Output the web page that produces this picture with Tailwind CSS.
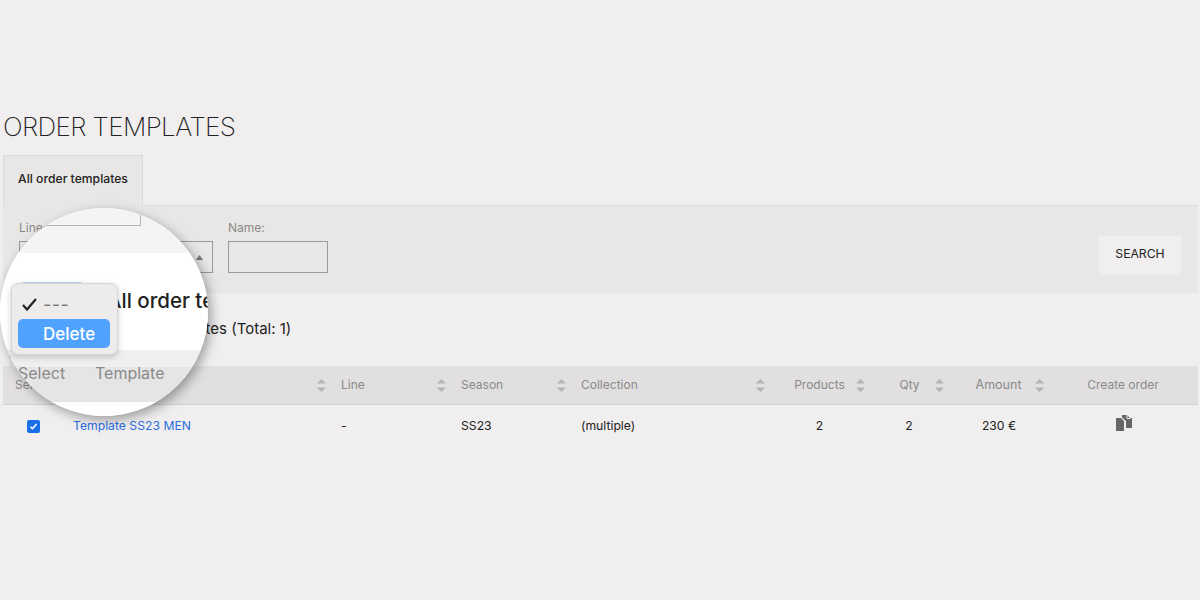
<!doctype html>
<html lang="en">
    <head>
        <meta charset="UTF-8" />
        <title>Order templates</title>
        <script src="https://cdn.jsdelivr.net/npm/@tailwindcss/browser@4"></script>
    </head>
    <body class="bg-[#f0eeef] font-['Inter',sans-serif] text-black">
        <div class="relative w-[1200px] h-[600px] overflow-hidden">
            <main class="pt-[112px] pl-[3px] pr-[2px]">
                <h1 class="text-[26px] leading-[30px] font-extralight text-[#222] tracking-[-0.62px] mb-[13px]">ORDER TEMPLATES</h1>

                <div class="w-[140px] h-[51px] -mb-px pb-[3px] relative bg-[#e8e7e5] border border-b-0 border-[#dcdbd9] flex items-center justify-center text-[12.2px] font-[450] text-[#222]">All order templates</div>

                <section class="h-[88px] bg-[#e8e7e5] border-t border-[#dcdbd9] flex items-start pl-[16px] pr-[17px]">
                    <div class="w-[109px] pt-[14px]">
                        <div class="text-[12px] leading-[16px] text-[#8a8a8a]">Line:</div>
                        <div class="mt-[5px] w-[100px] h-[32px] border border-[#9a9a9a]"></div>
                    </div>
                    <div class="w-[100px] pt-[14px]">
                        <div class="text-[12px] leading-[16px] text-[#8a8a8a]">Year:</div>
                        <div class="mt-[5px] w-[85px] h-[32px] border border-[#9a9a9a] flex items-center justify-end pr-[9px]">
                            <svg width="7" height="5" viewBox="0 0 7 5"><path d="M3.5 0L7 5H0z" fill="#777" /></svg>
                        </div>
                    </div>
                    <div class="pt-[14px]">
                        <div class="text-[12px] leading-[16px] text-[#8a8a8a]">Name:</div>
                        <div class="mt-[5px] w-[100px] h-[32px] border border-[#9a9a9a]"></div>
                    </div>
                    <button class="ml-auto mt-[30px] w-[82px] h-[39px] pb-[3px] bg-[#f0eeef] text-[12.2px] text-[#222]">SEARCH</button>
                </section>

                <div class="h-[73px] pl-[110px] pt-[26px] text-[15px] leading-[20px] text-[#222]">Order templates (Total: 1)</div>

                <div class="h-[39px] bg-[#e1dfdf] border-b border-[#d2d1d1] grid grid-cols-[60px_268px_120px_120px_199px_100px_80px_100px_148px] items-center text-[12px] text-[#8a8a8a]">
                    <div class="pl-[12px]">Select</div>
                    <div class="flex items-center justify-between pl-[10px] pr-[5px]">
                        <span>Template</span>
                        <svg width="9" height="13" viewBox="0 0 9 13"><path d="M4.5 0L9 4.5H0zM0 8.500h9L4.5 13z" fill="#b5b4b4" /></svg>
                    </div>
                    <div class="flex items-center justify-between pl-[10px] pr-[5px]">
                        <span>Line</span>
                        <svg width="9" height="13" viewBox="0 0 9 13"><path d="M4.5 0L9 4.5H0zM0 8.500h9L4.5 13z" fill="#b5b4b4" /></svg>
                    </div>
                    <div class="flex items-center justify-between pl-[10px] pr-[5px]">
                        <span>Season</span>
                        <svg width="9" height="13" viewBox="0 0 9 13"><path d="M4.5 0L9 4.5H0zM0 8.500h9L4.5 13z" fill="#b5b4b4" /></svg>
                    </div>
                    <div class="flex items-center justify-between pl-[10px] pr-[5px]">
                        <span>Collection</span>
                        <svg width="9" height="13" viewBox="0 0 9 13"><path d="M4.5 0L9 4.5H0zM0 8.500h9L4.5 13z" fill="#b5b4b4" /></svg>
                    </div>
                    <div class="grid grid-cols-[1fr_auto_1fr] items-center pl-[4px] pr-[5px]">
                        <span class="col-start-2">Products</span>
                        <svg class="justify-self-end" width="9" height="13" viewBox="0 0 9 13"><path d="M4.5 0L9 4.5H0zM0 8.500h9L4.5 13z" fill="#b5b4b4" /></svg>
                    </div>
                    <div class="grid grid-cols-[1fr_auto_1fr] items-center pl-[5px] pr-[6px]">
                        <span class="col-start-2">Qty</span>
                        <svg class="justify-self-end" width="9" height="13" viewBox="0 0 9 13"><path d="M4.5 0L9 4.5H0zM0 8.500h9L4.5 13z" fill="#b5b4b4" /></svg>
                    </div>
                    <div class="grid grid-cols-[1fr_auto_1fr] items-center pl-[3px] pr-[6px]">
                        <span class="col-start-2 text-[12.5px]">Amount</span>
                        <svg class="justify-self-end" width="9" height="13" viewBox="0 0 9 13"><path d="M4.5 0L9 4.5H0zM0 8.500h9L4.5 13z" fill="#b5b4b4" /></svg>
                    </div>
                    <div class="text-center pr-[2px]">Create order</div>
                </div>

                <div class="h-[40px] pt-[2px] grid grid-cols-[60px_268px_120px_120px_199px_100px_80px_100px_148px] items-center text-[12.2px] text-[#222]">
                    <div class="flex justify-center">
                        <span class="w-[13px] h-[13px] rounded-[2px] bg-[#1a6fe8] flex items-center justify-center">
                            <svg width="9" height="9" viewBox="0 0 9 9" fill="none"><path d="M1.500 4.700l2 2 4-4.600" stroke="#fff" stroke-width="1.600" /></svg>
                        </span>
                    </div>
                    <div class="pl-[10px]"><a href="#" class="text-[#2b6fdf]">Template SS23 MEN</a></div>
                    <div class="pl-[10px]">-</div>
                    <div class="pl-[10px]">SS23</div>
                    <div class="pl-[10px]">(multiple)</div>
                    <div class="text-center pr-[1px]">2</div>
                    <div class="text-center pr-[2px]">2</div>
                    <div class="text-center pr-[2px]">230 €</div>
                    <div class="flex justify-center pb-[6px]">
                        <svg width="17" height="16" viewBox="0 0 17 16"><path d="M0 3h5l3 3v10H0z" fill="#666" /><path d="M6 0h5l3 3h2v10h-6V6L6 2.500z" fill="#666" /><path d="M11 0v3.500h3.500" fill="none" stroke="#f0eeef" stroke-width="1" /></svg>
                    </div>
                </div>
            </main>

            <!-- magnifier lens over the page -->
            <div class="absolute left-0 top-[208px] w-[208px] h-[208px] rounded-full overflow-hidden bg-white shadow-[3px_4px_12px_rgba(0,0,0,0.35)]">
                <div class="h-[45px] bg-[#f4f4f4]">
                    <div class="ml-[46px] w-[95px] h-[18px] border-r border-b border-[#b5b5b5]"></div>
                </div>
                <div class="h-[97px] bg-white pl-[107px] pt-[34px] text-[20.5px] leading-[28px] font-[450] text-[#222] whitespace-nowrap">All order templates</div>
                <div class="h-[17px] bg-[#f0efef]"></div>
                <div class="h-[35px] bg-[#e6e5e5] flex items-start pl-[18px] text-[16px] leading-[20px] text-[#8a8a8a]">
                    <span class="w-[77px] -mt-[4px]">Select</span>
                    <span class="-mt-[4px]">Template</span>
                </div>
                <div class="h-[14px] bg-white"></div>
            </div>

            <!-- edge of the magnified select, showing past the lens and the menu -->
            <div class="absolute left-[10px] top-[355px] w-[5px] h-[13px] border-l border-b border-[#cfcdcd] rounded-bl-[3px]"></div>
            <div class="absolute left-[22px] top-[282px] w-[60px] h-[2px] rounded-t-[2px] bg-[#b4d0f2]"></div>

            <!-- select dropdown -->
            <div class="absolute left-[11px] top-[283px] w-[107px] h-[72px] rounded-[7px] bg-[#edecea] border border-[#d6d5d3] shadow-[0_2px_6px_rgba(0,0,0,0.2)] px-[6px]">
                <div class="h-[35px] pt-[5px] flex items-center pl-[4px] gap-[6px]">
                    <svg width="15" height="13" viewBox="0 0 15 13" fill="none"><path d="M1 7l4 4.500L14 1" stroke="#222" stroke-width="2.200" /></svg>
                    <span class="text-[18px] tracking-[0.5px] text-[#777]">---</span>
                </div>
                <div class="h-[29px] w-[92px] rounded-[5px] bg-[#4fa3ff] text-white text-[17px] font-medium leading-[30px] pl-[25px]">Delete</div>
            </div>
        </div>
    </body>
</html>
